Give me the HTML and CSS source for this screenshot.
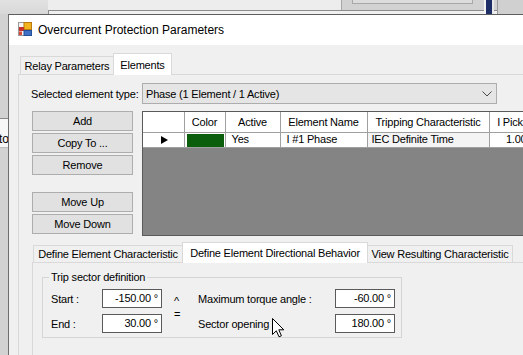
FILE: index.html
```html
<!DOCTYPE html>
<html>
<head>
<meta charset="utf-8">
<title>Overcurrent Protection Parameters</title>
<link rel="stylesheet" href="styles.css">
</head>
<body>
<div class="bg-left"></div>
<div class="bg-window"></div>
<div class="bg-divider"></div>
<div class="bg-button"></div>
<div class="bg-navy"></div>
<div class="bg-right"></div>
<div class="bg-side"><span>to</span></div>

<div class="dialog">
  <div class="titlebar">
    <svg class="app-icon" width="14" height="14" viewBox="0 0 14 14">
      <rect x="0.5" y="0.5" width="13" height="13" fill="#f4f4f4" stroke="#9a9a9a"/>
      <rect x="6" y="0.5" width="7.5" height="7" fill="#f2b31c" stroke="#b87a10" stroke-width="1"/>
      <rect x="1" y="5" width="5" height="4" fill="#c8302a"/>
      <rect x="1" y="9.5" width="3" height="3.5" fill="#d84a3a"/>
      <rect x="6" y="8.5" width="7.5" height="5" fill="#3d6fc4" stroke="#24509a" stroke-width="1"/>
    </svg>
    <span class="title">Overcurrent Protection Parameters</span>
  </div>
  <div class="client">
    <div class="tabctl">
      <div class="tabstrip outer-strip">
        <div class="tab t-relay">Relay Parameters</div>
        <div class="tab active t-elements">Elements</div>
      </div>
      <div class="tabpage outer-page">
        <div class="type-row">
          <span class="type-label">Selected element type:</span>
          <div class="combo">
            <span>Phase (1 Element / 1 Active)</span>
            <svg class="chevron" width="10" height="6" viewBox="0 0 10 6"><polyline points="0.5,0.5 5,5 9.5,0.5" fill="none" stroke="#4a4a4a" stroke-width="1"/></svg>
          </div>
        </div>
        <div class="main-row">
          <div class="btncol">
            <button class="btn">Add</button>
            <button class="btn">Copy To ...</button>
            <button class="btn">Remove</button>
            <button class="btn btn-sep">Move Up</button>
            <button class="btn">Move Down</button>
          </div>
          <div class="grid">
            <table class="grid-table">
              <colgroup>
                <col class="c-rh"><col class="c-color"><col class="c-active"><col class="c-name"><col class="c-trip"><col class="c-pick">
              </colgroup>
              <thead>
                <tr><th></th><th>Color</th><th>Active</th><th>Element Name</th><th>Tripping Characteristic</th><th>I Pick</th></tr>
              </thead>
              <tbody>
                <tr>
                  <td class="rowhead"><svg width="7" height="8" viewBox="0 0 7 8"><polygon points="0,0 7,4 0,8" fill="#000"/></svg></td>
                  <td class="swatch-cell"><div class="swatch"></div></td>
                  <td>Yes</td>
                  <td>I #1 Phase</td>
                  <td class="combo-cell">IEC Definite Time</td>
                  <td class="num">1.00</td>
                </tr>
              </tbody>
            </table>
          </div>
        </div>
        <div class="tabctl inner-ctl">
          <div class="tabstrip inner-strip">
            <div class="tab t-char">Define Element Characteristic</div>
            <div class="tab active t-dir">Define Element Directional Behavior</div>
            <div class="tab t-view">View Resulting Characteristic</div>
          </div>
          <div class="tabpage inner-page">
            <fieldset class="group">
              <legend>Trip sector definition</legend>
              <div class="sector-grid">
                <span class="flabel">Start :</span>
                <div class="tbox">-150.00 °</div>
                <div class="link"><span class="caret">^</span><span class="eq">=</span></div>
                <span class="flabel">Maximum torque angle :</span>
                <div class="tbox">-60.00 °</div>
                <span class="flabel">End :</span>
                <div class="tbox">30.00 °</div>
                <span class="flabel">Sector opening</span>
                <div class="tbox">180.00 °</div>
              </div>
            </fieldset>
          </div>
        </div>
      </div>
    </div>
  </div>
</div>

<svg class="cursor" width="13" height="20" viewBox="0 0 13 20">
  <path d="M0.5 0.5 L0.5 16.5 L4.3 12.8 L7 18.8 L9.4 17.8 L6.8 11.8 L11.8 11.8 Z" fill="#fff" stroke="#000" stroke-width="1" stroke-linejoin="miter"/>
</svg>
</body>
</html>
```

FILE: styles.css
```css
* { box-sizing: border-box; }

html, body {
  margin: 0;
  padding: 0;
}

body {
  width: 523px;
  height: 355px;
  overflow: hidden;
  position: relative;
  background: #d2d2d2;
  font-family: "Liberation Sans", Arial, sans-serif;
  font-size: 11px;
  letter-spacing: -0.2px;
  color: #000;
}

/* ---- desktop behind the dialog ---- */
.bg-left {
  position: absolute;
  left: 0; top: 0;
  width: 48px; height: 14px;
  background: linear-gradient(#e2e2e2, #d8d8d8);
}
.bg-window {
  position: absolute;
  left: 48px; top: 10px;
  width: 600px; height: 10px;
  border-top: 1px solid #8c8c8c;
  border-left: 1px solid #8c8c8c;
  background: #f0f0f0;
}
.bg-divider {
  position: absolute;
  left: 48px; top: 0;
  width: 294px; height: 10px;
  background: #ededed;
  border-right: 1px solid #a8a8a8;
}
.bg-button {
  position: absolute;
  left: 352px; top: -6px;
  width: 121px; height: 10px;
  background: #dcdcdc;
  border: 1px solid #a8a8a8;
}
.bg-navy {
  position: absolute;
  left: 484px; top: 0;
  width: 10px; height: 14px;
  background: #1d2f66;
  border-left: 2px solid #f4f4f4;
  border-right: 2px solid #e8e8e8;
}
.bg-right {
  position: absolute;
  left: 497px; top: 0;
  width: 30px; height: 14px;
  background: #d0d0d0;
  border-left: 1px solid #9a9a9a;
}
.bg-side {
  position: absolute;
  left: 0; top: 118px;
  width: 8px; height: 30px;
  background: #f7f7f7;
  border-top: 1px solid #8a8a8a;
  border-bottom: 1px solid #bdbdbd;
  overflow: hidden;
  font-size: 12px;
  line-height: 14px;
  padding-top: 13px;
}
.bg-side span {
  display: block;
  margin-left: -1px;
}

/* ---- dialog ---- */
.dialog {
  position: absolute;
  left: 8px; top: 14px;
  width: 570px; height: 360px;
  background: #f0f0f0;
  border-top: 1px solid #5e5e5e;
  border-left: 1px solid #6e6e6e;
}

.titlebar {
  height: 30px;
  background: #fff;
  display: flex;
  align-items: center;
  gap: 6px;
  padding-left: 9px;
  font-size: 12px;
  letter-spacing: 0;
}
.app-icon { display: block; margin-top: -2px; }

.client {
  padding: 8px 0 0 9px;
}

/* ---- tab controls ---- */
.tabstrip {
  display: flex;
  align-items: flex-end;
}
.tab {
  height: 18px;
  display: flex;
  align-items: center;
  justify-content: center;
  white-space: nowrap;
  background: #f0f0f0;
  border: 1px solid #d9d9d9;
  border-bottom: none;
  padding: 0;
}
.tab + .tab { margin-left: -1px; }
.tab.active {
  height: 22px;
  margin-bottom: -1px;
  background: #fff;
  position: relative;
  z-index: 1;
}

.outer-strip {
  height: 21px;
  padding-left: 2px;
}
.t-relay { width: 94px; }
.t-elements { width: 59px; }

.tabpage {
  border: 1px solid #d9d9d9;
  background: #f0f0f0;
}

.outer-page {
  height: 300px;
  padding: 8px 0 0 13px;
}

.type-row {
  display: flex;
  align-items: center;
}
.type-label {
  width: 110px;
  margin-left: -1px;
}
.combo {
  width: 355px;
  height: 21px;
  margin-left: 1px;
  background: #e5e5e5;
  border: 1px solid #adadad;
  display: flex;
  align-items: center;
  justify-content: space-between;
  padding: 0 4px 0 3px;
}
.chevron { display: block; }

.main-row {
  display: flex;
  gap: 9px;
  margin-top: 7px;
}
.btncol {
  width: 101px;
  display: flex;
  flex-direction: column;
  gap: 2px;
}
.btn {
  display: block;
  width: 101px;
  height: 20px;
  margin: 0;
  padding: 0;
  font: inherit;
  letter-spacing: inherit;
  color: #000;
  background: #e1e1e1;
  border: 1px solid #adadad;
  text-align: center;
}
.btn-sep { margin-top: 15px; }

/* ---- data grid ---- */
.grid {
  width: 400px;
  height: 125px;
  border: 1px solid #5a5a5a;
  background: #848484;
  overflow: hidden;
}
.grid-table {
  border-collapse: collapse;
  table-layout: fixed;
  width: 388px;
}
.c-rh { width: 41px; }
.c-color { width: 41px; }
.c-active { width: 55px; }
.c-name { width: 87px; }
.c-trip { width: 122px; }
.c-pick { width: 42px; }

.grid-table th,
.grid-table td {
  padding: 0;
  border-right: 1px solid #a0a0a0;
  border-bottom: 1px solid #a0a0a0;
  background: #fff;
  white-space: nowrap;
  overflow: hidden;
}
.grid-table th {
  height: 20px;
  font-weight: normal;
  text-align: center;
}
.grid-table td {
  height: 15px;
  padding-left: 6px;
  line-height: 13px;
}
.grid-table td.rowhead {
  padding: 0;
  text-align: center;
}
.rowhead svg { display: inline-block; vertical-align: middle; margin-left: 2px; }
.grid-table td.swatch-cell { padding: 1px 1px 0 2px; }
.swatch {
  height: 13px;
  background: #0b5e0b;
}
.grid-table td.combo-cell { padding-left: 4px; background: #f4f4f4; }
.grid-table td.num { text-align: right; padding-right: 4px; }

/* ---- inner tab control ---- */
.inner-ctl {
  margin-top: 6px;
}
.inner-strip {
  height: 20px;
  padding-left: 1px;
}
.inner-strip .tab { height: 17px; }
.inner-strip .tab.active { height: 21px; }
.t-char { width: 150px; }
.t-dir { width: 186px; }
.t-view { width: 146px; }

.inner-page {
  height: 120px;
  padding: 7px 0 0 9px;
}

.group {
  margin: 0;
  width: 360px;
  padding: 0 0 4px 6px;
  border: 1px solid #d5d5d5;
}
.group legend {
  padding: 0 2px;
  line-height: 14px;
}

.sector-grid {
  display: grid;
  grid-template-columns: 51px 60px 36px 137px 60px;
  grid-template-rows: 19px 19px;
  row-gap: 6px;
  margin-top: 5px;
  margin-left: 2px;
  align-items: center;
}
.link {
  grid-column: 3;
  grid-row: 1 / span 2;
  align-self: start;
  display: flex;
  flex-direction: column;
  align-items: flex-start;
  padding-left: 12px;
  line-height: 12px;
}
.caret { margin-top: 6px; }
.eq { margin-top: 1px; }
.tbox {
  height: 19px;
  background: #fff;
  border: 1px solid #5a5a5a;
  text-align: right;
  padding-right: 3px;
  line-height: 17px;
}

.cursor {
  position: absolute;
  left: 272px;
  top: 318px;
}
```
